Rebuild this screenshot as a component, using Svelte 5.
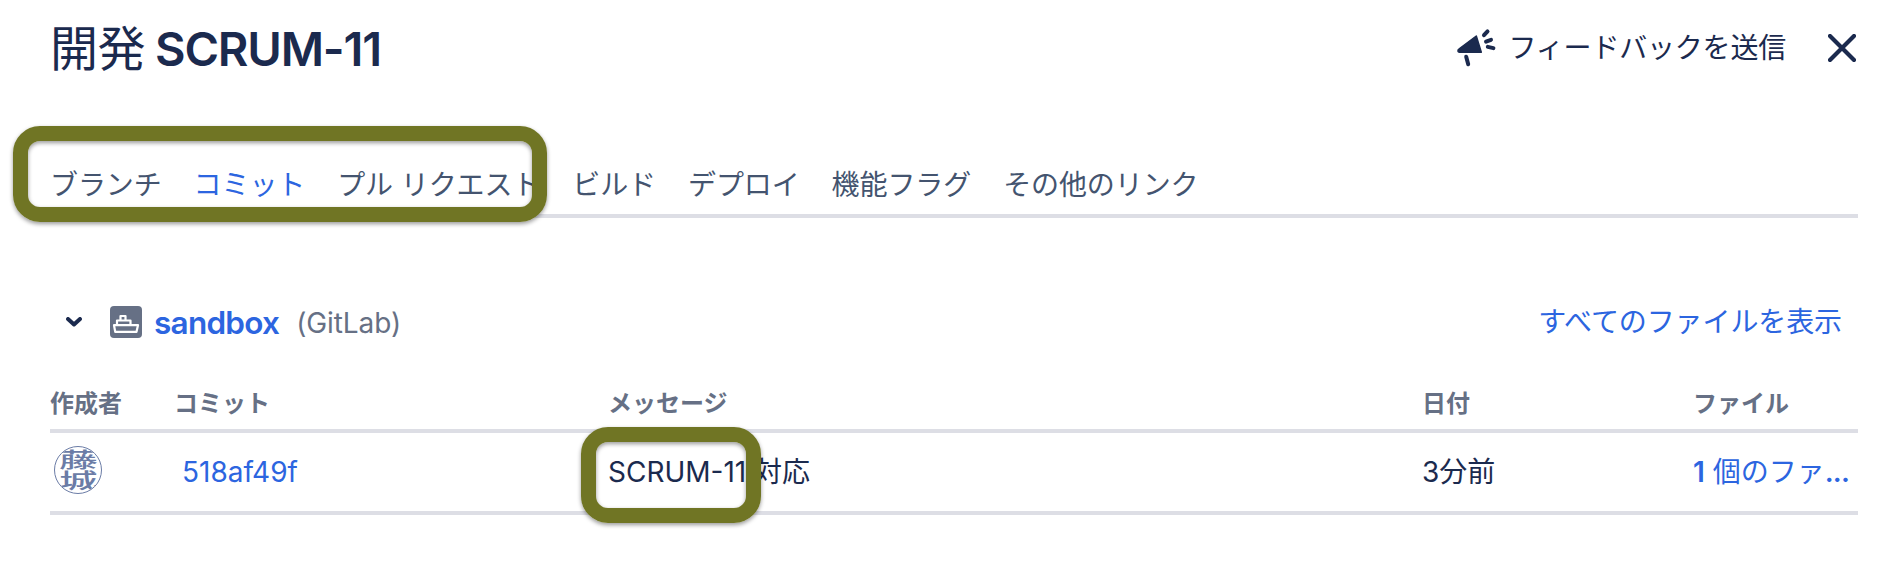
<script>
  const tabs = [
    { label: 'ブランチ' },
    { label: 'コミット', active: true },
    { label: 'プル リクエスト' },
    { label: 'ビルド' },
    { label: 'デプロイ' },
    { label: '機能フラグ' },
    { label: 'その他のリンク' }
  ];
  const columns = ['作成者', 'コミット', 'メッセージ', '日付', 'ファイル'];
</script>

<main class="dialog">
  <header class="top">
    <h1>開発 <span class="key">SCRUM-11</span></h1>
    <div class="actions">
      <button class="feedback">
        <svg width="40" height="40" viewBox="0 0 40 40" fill="none" stroke="currentColor" stroke-linecap="round">
          <path d="M19.3 8 24.3 24.2H2.5Q.8 24.2 1 22.6 1 21.6 2.2 20.8Z" fill="currentColor" stroke-width="1.5" stroke-linejoin="round" />
          <path d="M9.2 28.7 11.2 36.3M27 7.2 30.5 3.4M29 13.6l5-1.8M30.8 18.9l5.6 1.2" stroke-width="4" />
        </svg>
        <span>フィードバックを送信</span>
      </button>
      <button class="close" aria-label="閉じる">
        <svg width="28" height="28" viewBox="0 0 28 28" stroke="currentColor" stroke-width="4.2" stroke-linecap="round">
          <path d="M2 2 26 26M26 2 2 26" />
        </svg>
      </button>
    </div>
  </header>

  <nav class="tabs">
    {#each tabs as tab}
      <span class="tab" class:active={tab.active}>{tab.label}</span>
    {/each}
    <i class="mark mark-tabs"></i>
  </nav>

  <section class="repo">
    <svg class="chevron" width="16" height="10" viewBox="0 0 16 10" fill="none" stroke="currentColor" stroke-width="4" stroke-linecap="round" stroke-linejoin="round">
      <path d="M2 2 8 7.5 14 2" />
    </svg>
    <svg class="repo-icon" width="32" height="32" viewBox="0 0 32 32">
      <rect width="32" height="32" rx="4" fill="#667085" />
      <path d="M4 19.2H28L26.5 25.8H5.2ZM7 18.5V14.5H20.5V18.5M10.5 14V10H15.5V14" fill="none" stroke="#fff" stroke-width="2.2" stroke-linejoin="round" />
    </svg>
    <a class="repo-name">sandbox</a>
    <span class="provider">(GitLab)</span>
    <a class="all-files">すべてのファイルを表示</a>
  </section>

  <section class="table">
    <div class="row head">
      {#each columns as column}
        <span>{column}</span>
      {/each}
    </div>
    <div class="row body">
      <span class="avatar"><b>藤城</b></span>
      <a class="hash">518af49f</a>
      <span class="message"><span class="issue">SCRUM-11</span> 対応<i class="mark mark-issue"></i></span>
      <span class="date">3分前</span>
      <a class="files"><b>1</b> 個のファ<b class="dots">...</b></a>
    </div>
  </section>
</main>

<style>
  :global(body) {
    background: #fff;
  }
  .dialog {
    box-sizing: border-box;
    width: 1894px;
    height: 572px;
    padding: 0 36px 0 50px;
    overflow: hidden;
    font: 28px/40px Inter, 'Noto Sans CJK JP', sans-serif;
    color: #1b2a4e;
  }
  button {
    border: 0;
    padding: 0;
    background: none;
    font: inherit;
    color: inherit;
  }
  svg {
    display: block;
    flex: none;
  }
  a {
    color: #2c65e0;
  }
  .top {
    display: flex;
    justify-content: space-between;
    height: 126px;
  }
  h1 {
    margin: 19px 0 0;
    height: 60px;
    font-size: 48px;
    line-height: 60px;
    font-weight: 400;
    letter-spacing: -0.5px;
    word-spacing: -3px;
    white-space: nowrap;
  }
  .key {
    font-size: 47px;
    font-weight: 600;
    letter-spacing: -1.2px;
  }
  .actions {
    display: flex;
    align-items: center;
    gap: 42px;
    height: 96px;
    padding-right: 2px;
  }
  .feedback {
    display: flex;
    align-items: center;
    gap: 12px;
    letter-spacing: -0.2px;
  }
  .tabs {
    position: relative;
    display: flex;
    gap: 32px;
    box-sizing: border-box;
    height: 92px;
    padding-top: 39px;
    border-bottom: 4px solid #dddee5;
    color: #44546f;
    letter-spacing: -0.1px;
    white-space: nowrap;
  }
  .active {
    color: #2c65e0;
  }
  .mark {
    position: absolute;
    box-sizing: border-box;
    height: 96px;
    border: 15px solid #707524;
    border-radius: 27px;
    box-shadow: 0 2px 4px rgba(0, 0, 0, 0.4), inset 0 2px 4px rgba(0, 0, 0, 0.4);
  }
  .mark-tabs {
    left: -37px;
    top: 0;
    width: 534px;
  }
  .repo {
    display: flex;
    align-items: center;
    height: 60px;
    margin-top: 74px;
    padding: 0 16px;
  }
  .repo-icon {
    margin-left: 28px;
  }
  .repo-name {
    margin: 2px 0 0 12px;
    font-size: 31.5px;
    font-weight: 600;
    letter-spacing: -0.75px;
  }
  .provider {
    margin: 1px 0 0 17px;
    color: #667085;
    letter-spacing: -0.1px;
  }
  .all-files {
    margin-left: auto;
    letter-spacing: -0.1px;
  }
  .row {
    display: grid;
    grid-template-columns: 124px 434px 814px 271px 1fr;
    align-items: center;
    border-bottom: 4px solid #dddee5;
    white-space: nowrap;
  }
  .head {
    height: 51px;
    margin-top: 26px;
    font-size: 24px;
    font-weight: 700;
    color: #667085;
  }
  .body {
    height: 78px;
  }
  .avatar {
    display: flex;
    justify-content: center;
    align-items: center;
    box-sizing: border-box;
    width: 48px;
    height: 48px;
    margin: -4px 0 0 4px;
    border: 1.5px solid #6b7ca6;
    border-radius: 50%;
    color: #6b7ca6;
    overflow: hidden;
  }
  .avatar b {
    width: 21px;
    font-size: 21px;
    line-height: 21px;
    font-weight: 500;
    white-space: normal;
    word-break: break-all;
    transform: scaleX(1.85);
  }
  .hash {
    margin-left: 8px;
  }
  .message {
    position: relative;
  }
  .mark-issue {
    left: -27px;
    top: -25px;
    width: 180px;
  }
  .files b {
    font-weight: 600;
  }
  .files .dots {
    letter-spacing: -0.8px;
  }
</style>
